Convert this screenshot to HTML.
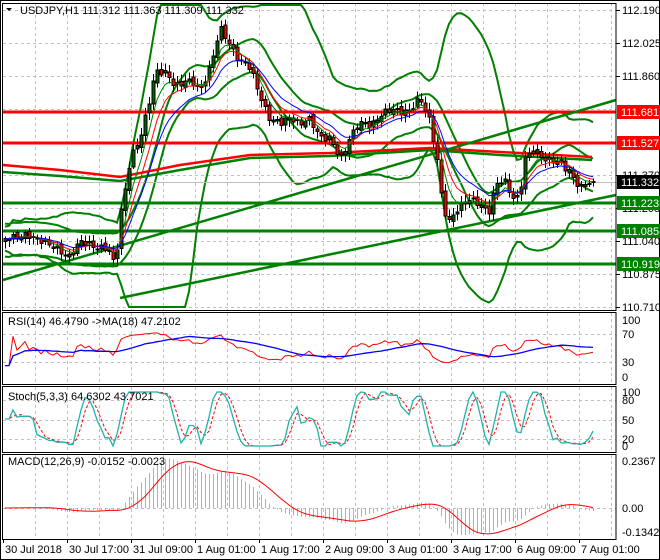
<!DOCTYPE html>
<html><head><meta charset="utf-8"><style>
html,body{margin:0;padding:0;background:#fff;}
svg{display:block;font-family:"Liberation Sans",sans-serif;font-size:11px;}
</style></head><body>
<svg id="s" width="660" height="560" xmlns="http://www.w3.org/2000/svg"></svg>
<script>
var S=document.getElementById('s'),H='';
function L(x1,y1,x2,y2,c,w,d){H+='<line x1="'+x1+'" y1="'+y1+'" x2="'+x2+'" y2="'+y2+'" stroke="'+c+'" stroke-width="'+(w||1)+'"'+(d?' stroke-dasharray="'+d+'"':'')+' shape-rendering="crispEdges"/>';}
function P(pts,c,w,d){H+='<polyline fill="none" points="'+pts.map(function(p){return p[0].toFixed(1)+','+p[1].toFixed(1)}).join(' ')+'" stroke="'+c+'" stroke-width="'+(w||1)+'"'+(d?' stroke-dasharray="'+d+'"':'')+'/>';}
function T(x,y,t,c,a){H+='<text x="'+x+'" y="'+y+'" fill="'+(c||'#000')+'"'+(a?' text-anchor="'+a+'"':'')+'>'+t+'</text>';}
function R(x,y,w,h,f,s){H+='<rect x="'+x+'" y="'+y+'" width="'+w+'" height="'+h+'" fill="'+f+'"'+(s?' stroke="'+s+'"':'')+' shape-rendering="crispEdges"/>';}
var XR=616;
var panes=[[3,310],[313,383],[387,451],[455,538]];
for(var x=35;x<XR;x+=32){panes.forEach(function(p){L(x+.5,p[0],x+.5,p[1],'#c0c0c0',1,'3,3');});}
[10,43,76,109,142,175,208,241,274,307].forEach(function(y){L(3,y+.5,XR,y+.5,'#c0c0c0',1,'3,3');});
[334,362,400,420,439,508].forEach(function(y){L(3,y+.5,XR,y+.5,'#c0c0c0',1,'3,3');});
var K=[[3,240],[10,235],[20,237],[40,238],[55,250],[70,255],[80,243],[95,245],[108,250],[115,268],[120,215],[130,160],[140,140],[150,95],[155,70],[165,75],[175,85],[185,80],[200,90],[210,65],[220,30],[230,45],[240,60],[250,70],[260,95],[270,120],[280,125],[290,115],[300,125],[310,120],[320,135],[330,140],[340,160],[350,135],[360,125],[370,125],[380,115],[395,110],[410,110],[420,100],[430,120],[437,160],[442,205],[448,225],[455,210],[465,200],[480,205],[490,210],[495,185],[505,183],[515,200],[520,190],[525,160],[535,150],[545,158],[560,165],[570,170],[580,190],[585,185],[592,182]];
function iy(x){for(var i=1;i<K.length;i++)if(x<=K[i][0]){var a=K[i-1],b=K[i];return a[1]+(b[1]-a[1])*(x-a[0])/(b[0]-a[0]);}return K[K.length-1][1];}
var N=148,cl=[],xs=[];
for(var i=0;i<N;i++){var x=5+4*i;xs.push(x);cl.push(iy(x)+Math.sin(i*2.3)*3+Math.sin(i*0.9)*2);}
cl[N-1]=182;
function ema(a,n){var k=2/(n+1),o=[a[0]];for(var i=1;i<a.length;i++)o.push(o[i-1]+k*(a[i]-o[i-1]));return o;}
function sma(a,n){return a.map(function(v,i){var s=0,c=0;for(var j=Math.max(0,i-n+1);j<=i;j++){s+=a[j];c++;}return s/c;});}
function sd(a,m,n){return a.map(function(v,i){var s=0,c=0;for(var j=Math.max(0,i-n+1);j<=i;j++){s+=(a[j]-m[i])*(a[j]-m[i]);c++;}return Math.sqrt(s/c);});}
function pts(a,f,t){var o=[];for(var i=f||0;i<(t||a.length);i++)o.push([xs[i],a[i]]);return o;}
var m20=sma(cl,20),s20=sd(cl,m20,20);
P(pts(m20.map(function(m,i){return Math.max(5,m-2.6*s20[i]-12);})),'#008000',2);
P(pts(m20.map(function(m,i){return Math.min(307,m+2.6*s20[i]+12);})),'#008000',2);
var m10=sma(cl,12);
P(pts(m10.map(function(m,i){return m-15;})),'#008000',2);
P(pts(m10.map(function(m,i){return m+18;})),'#008000',2);
P([[3,165],[60,170],[120,177],[180,165],[250,155],[330,153],[430,148],[500,152],[592,157]],'#ff0000',2.5);
P([[3,172],[60,176],[120,181],[180,170],[250,158],[330,156],[430,150],[500,155],[592,160]],'#008000',2.5);
L(3,112,XR,112,'#ff0000',3);L(3,143,XR,143,'#ff0000',3);
L(3,203,XR,203,'#008000',3);L(3,231,XR,231,'#008000',3);L(3,264,XR,264,'#008000',3);
L(3,182.5,XR,182.5,'#c0c0c0',1);
P([[3,280],[616,100]],'#008000',2.5);P([[120,298],[616,195]],'#008000',2.5);
var op=[];for(i=0;i<N;i++){op.push(i?cl[i-1]+Math.sin(i*1.7)*2:cl[0]+3);}
for(i=0;i<N;i++){var o=op[i],c=cl[i],hi=Math.min(o,c)-2-Math.abs(Math.sin(i*3.1))*5,lo=Math.max(o,c)+2+Math.abs(Math.cos(i*2.7))*5;
L(xs[i]+.5,hi,xs[i]+.5,lo,'#000',1);var t=Math.min(o,c),h=Math.max(1,Math.abs(o-c));R(xs[i]-1,t,3,h,c<o?'#006400':'#ff0000','#000');}
P(pts(ema(cl,5)),'#008000',1);P(pts(ema(cl,8)),'#ff0000',1);P(pts(ema(cl,13)),'#0000ff',1);
T(20,14,'USDJPY,H1  111.312 111.363 111.309 111.332');H+='<polygon points="6,8 12,8 9,11" fill="#000"/>';
var ch=cl.map(function(v,i){return i?cl[i-1]-v:0;}),g=ema(ch.map(function(v){return Math.max(v,0)}),14),l=ema(ch.map(function(v){return Math.max(-v,0)}),14);
var rsi=g.map(function(v,i){return 50+ (v/(v+l[i]+1e-9)*100-50)*0.6;});
function ry(v){return 377-v*0.57;}
P(pts(rsi.map(ry)),'#ff0000',1);P(pts(sma(rsi,18).map(ry)),'#0000ff',1.3);
T(8,325,'RSI(14) 46.4790  -&gt;MA(18) 47.2102');
var st=cl.map(function(v,i){var a=1e9,b=-1e9;for(var j=Math.max(0,i-5);j<=i;j++){a=Math.min(a,cl[j]);b=Math.max(b,cl[j]);}return b-a<1?50:(b-v)/(b-a)*100;});
var k3=sma(st,3),d3=sma(k3,3);function sy(v){return 446-v*0.54;}
P(pts(d3.map(sy)),'#ff0000',1,'3,2');P(pts(k3.map(sy)),'#20b2aa',1.3);
T(8,400,'Stoch(5,3,3) 64.6302 43.7021');
var e12=ema(cl,12),e26=ema(cl,26),md=e12.map(function(v,i){return e26[i]-v;}),sg=sma(md,9);
function my(v){return 508-v*1.1;}
for(i=0;i<N;i++){L(xs[i]+.5,508,xs[i]+.5,my(md[i]),'#b0b0b0',1);}
P(pts(sg.map(my)),'#ff0000',1);
T(8,465,'MACD(12,26,9) -0.0152 -0.0023');
R(.5,.5,659,559,'none','#000');
[[3,310],[312,384],[386,452],[454,539]].forEach(function(p){R(2.5,p[0]+.5,XR-2.5,p[1]-p[0],'none','#000');});
[['112.190',10],['112.025',43],['111.860',76],['111.370',175],['111.205',208],['111.040',241],['110.875',274],['110.710',307]].forEach(function(a){L(XR,a[1]+.5,XR+4,a[1]+.5,'#000');T(622,a[1]+4,a[0]);});
function B(t,y,c){R(617,y-7,43,14,c);T(621,y+4,t,'#fff');}
B('111.681',112,'#ff0000');B('111.527',143,'#ff0000');B('111.332',182,'#000');B('111.223',203,'#008000');B('111.085',231,'#008000');B('110.919',264,'#008000');
[['100',320],['70',334],['30',362],['0',377]].forEach(function(a){T(622,a[1]+4,a[0]);});
[['100',392],['80',400],['50',420],['20',439],['0',446]].forEach(function(a){T(622,a[1]+4,a[0]);});
[['0.2367',461],['0.00',508],['-0.1342',532]].forEach(function(a){T(622,a[1]+4,a[0]);});
[['30 Jul 2018',3],['30 Jul 17:00',67],['31 Jul 09:00',131],['1 Aug 01:00',195],['1 Aug 17:00',259],['2 Aug 09:00',323],['3 Aug 01:00',387],['3 Aug 17:00',451],['6 Aug 09:00',515],['7 Aug 01:00',579]].forEach(function(a){L(a[1]+.5,539,a[1]+.5,543,'#000');T(a[1]+2,553,a[0]);});
S.innerHTML=H;
</script>
</body></html>
